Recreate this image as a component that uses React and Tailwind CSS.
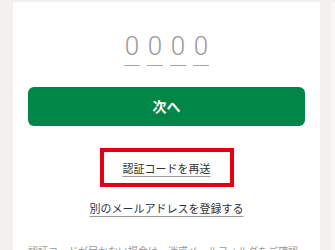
const digits = ['0', '0', '0', '0'];

const App = () => {
  return (
    <div className="flex h-[250px] w-[335px] overflow-hidden bg-[#f2f1ed] pt-[2px] pl-[13px]" style={{ fontFamily: '"Noto Sans CJK JP", sans-serif' }}>
      <div className="flex w-[307px] flex-col items-center bg-white px-[15px] pt-[25px]">
        <div className="flex shrink-0 gap-[7px]">
          {digits.map((d, i) => (
            <span
              key={i}
              className="w-[16px] border-b border-[#a6a6a6] text-center text-[26px] font-light leading-[38px] text-[#9a9a9a]"
              style={{ fontFamily: 'Roboto, sans-serif' }}
            >
              {d}
            </span>
          ))}
        </div>

        <button className="mt-[21px] flex h-[39px] w-full shrink-0 items-center justify-center rounded-[6px] bg-[#008747] text-[14px] font-bold text-white">
          次へ
        </button>

        <div className="mt-[22px] flex h-[39px] w-[134px] shrink-0 items-center justify-center border-[4px] border-[#e60012]">
          <span className="text-[11px] leading-[16px] text-[#333] underline decoration-[#999] underline-offset-[3px]">
            認証コードを再送
          </span>
        </div>

        <span className="mt-[13px] shrink-0 text-[11px] leading-[16px] text-[#333] underline decoration-[#999] underline-offset-[3px]">
          別のメールアドレスを登録する
        </span>

        <p className="mt-[28px] shrink-0 self-start text-[10px] leading-[14px] text-[#999]">
          認証コードが届かない場合は、迷惑メールフォルダをご確認ください。
        </p>
      </div>
      <div className="w-[11px]" />
      <div className="w-[4px] bg-[#f8f8f6]" />
    </div>
  );
};

export default App;
